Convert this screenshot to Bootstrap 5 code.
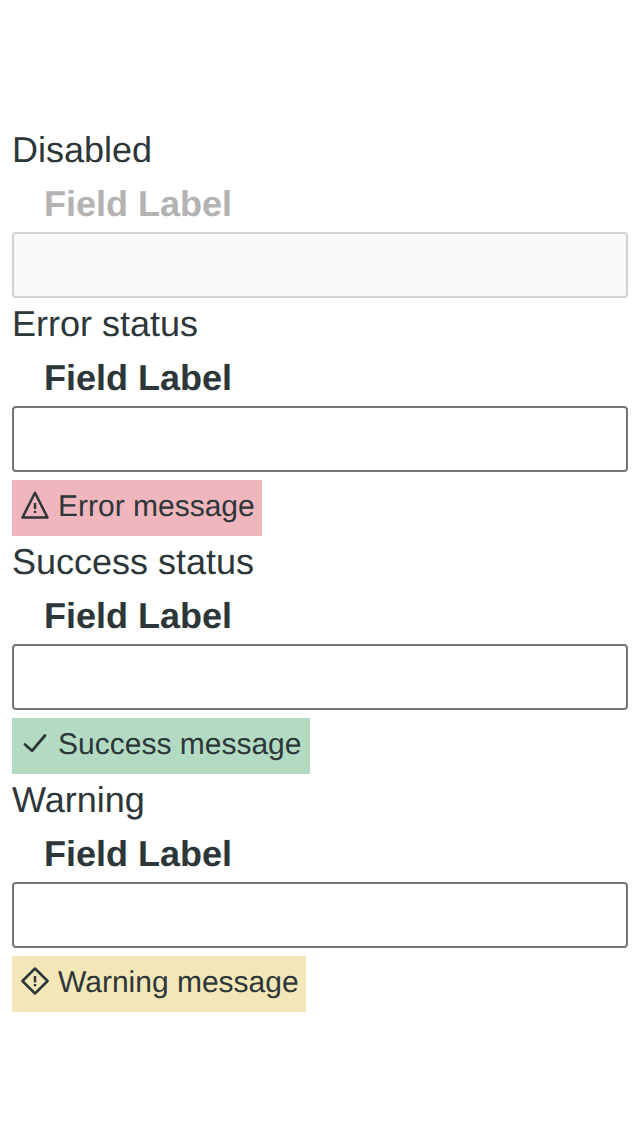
<!DOCTYPE html>
<html lang="en">
<head>
<meta charset="utf-8">
<meta name="viewport" content="width=device-width, initial-scale=1">
<title>Field status</title>
<link href="https://cdn.jsdelivr.net/npm/bootstrap@5.3.0/dist/css/bootstrap.min.css" rel="stylesheet">
<style>
body{font-family:"Liberation Sans",Arial,sans-serif;color:#2d3639;background:#fff;text-rendering:geometricPrecision}
.fields{padding:126px 12px 0}
.fields section{margin-bottom:2px}
.state-title{font-size:36px;line-height:48px;height:48px}
.field-label{font-size:36px;line-height:48px;margin:6px 0 4px;padding-left:32px;font-weight:700;height:48px;display:block}
.field-input{height:66px;border:2px solid #767676;border-radius:4px;padding:0 16px;font-size:36px}
.field-input:disabled{background:#f8f8f8;border-color:#d1d1d1}
.is-off .field-label{color:#b3b3b3}
.status-note{height:56px;margin-top:8px;font-size:30px;line-height:54px;padding:0 8px;white-space:nowrap}
.status-note svg{width:30px;height:30px;margin:10px 8px 0 0;flex:none}
.note-error{background:#f0b6bd;width:250px}
.note-success{background:#b3dbc4;width:298px}
.note-warning{background:#f4e7b7;width:294px}
</style>
</head>
<body>
<main class="fields d-flex flex-column">
<section class="is-off">
<div class="state-title">Disabled</div>
<label class="field-label" for="f1">Field Label</label>
<input class="form-control field-input" id="f1" disabled>
</section>
<section>
<div class="state-title">Error status</div>
<label class="field-label" for="f2">Field Label</label>
<input class="form-control field-input" id="f2">
<div class="status-note note-error d-flex align-items-start"><svg viewBox="0 0 30 30" fill="none" stroke="#2d3639" stroke-width="2.500"><path d="M15 2.800L27.500 27.500H2.500Z" stroke-linejoin="round"/><path d="M15 12.900v6M15 20.700v2.300"/></svg>Error message</div>
</section>
<section>
<div class="state-title">Success status</div>
<label class="field-label" for="f3">Field Label</label>
<input class="form-control field-input" id="f3">
<div class="status-note note-success d-flex align-items-start"><svg viewBox="0 0 30 30" fill="none" stroke="#2d3639" stroke-width="2.800"><path d="M5 16.500L12 22.800L25 7.500" stroke-linecap="round" stroke-linejoin="round"/></svg>Success message</div>
</section>
<section>
<div class="state-title">Warning</div>
<label class="field-label" for="f4">Field Label</label>
<input class="form-control field-input" id="f4">
<div class="status-note note-warning d-flex align-items-start"><svg viewBox="0 0 30 30" fill="none" stroke="#2d3639" stroke-width="2.500"><path d="M15 2.500L27.600 15L15 27.500L2.400 15Z" stroke-linejoin="round"/><path d="M15 10v6.500M15 18v2.300"/></svg>Warning message</div>
</section>
</main>
<script src="https://cdn.jsdelivr.net/npm/bootstrap@5.3.0/dist/js/bootstrap.bundle.min.js"></script>
</body>
</html>
